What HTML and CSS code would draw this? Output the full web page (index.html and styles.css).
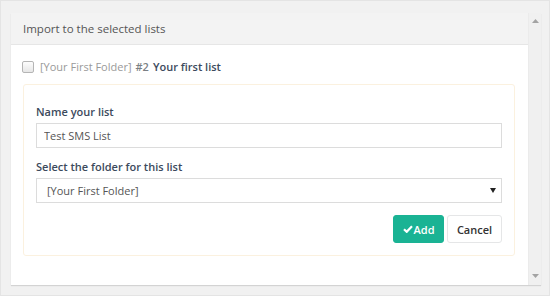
FILE: index.html
```html
<!DOCTYPE html>
<html lang="en">
<head>
    <meta charset="UTF-8">
    <title>Import to lists</title>
    <link rel="stylesheet" href="styles.css">
</head>
<body>

    <div class="frame">
        <div class="card">
            <div class="card-main">
                <div class="card-header">Import to the selected lists</div>

                <div class="card-body">
                    <label class="list-check">
                        <input type="checkbox">
                        <span class="folder">[Your First Folder]</span>
                        <span class="list-id">#2</span>
                        <span class="list-name">Your first list</span>
                    </label>

                    <div class="new-list">
                        <div class="field">
                            <label>Name your list</label>
                            <input type="text" value="Test SMS List">
                        </div>

                        <div class="field">
                            <label>Select the folder for this list</label>
                            <div class="select-wrap">
                                <select>
                                    <option>[Your First Folder]</option>
                                </select>
                                <svg class="caret" width="6" height="5" viewBox="0 0 6 5"><path d="M0 0h6L3 5z" fill="#222"/></svg>
                            </div>
                        </div>

                        <div class="actions">
                            <button class="btn-add">
                                <svg width="10" height="8" viewBox="0 0 10 8"><path d="M1 4.2l2.7 2.6L9 1.2" fill="none" stroke="#fff" stroke-width="2.2"/></svg>Add
                            </button>
                            <button class="btn-cancel">Cancel</button>
                        </div>
                    </div>
                </div>
            </div>

            <div class="scrollbar">
                <svg width="7" height="4" viewBox="0 0 7 4"><path d="M0 4h7L3.5 0z" fill="#a3a3a3"/></svg>
                <svg width="7" height="4" viewBox="0 0 7 4"><path d="M0 0h7L3.5 4z" fill="#a3a3a3"/></svg>
            </div>
        </div>
    </div>

</body>
</html>
```

FILE: styles.css
```css
/* Global Styles */
* {
    box-sizing: border-box;
}

body {
    font-family: 'Open Sans', 'Liberation Sans', sans-serif;
    font-size: 11px;
    background-color: #f1f1f1;
    color: #555;
    margin: 0;
}

.frame {
    height: 296px;
    width: 550px;
    border: 1px solid #e4e4e4;
    padding: 12px 8px 10px 10px;
}

.card {
    display: flex;
    height: 272px;
    background-color: #fff;
    box-shadow: 0 1px 1px rgba(0, 0, 0, 0.12);
}

.card-main {
    flex: 1;
}

.card-header {
    height: 32px;
    background-color: #f3f3f3;
    border-bottom: 1px solid #e6e6e6;
    padding: 7px 12px;
    font-size: 11.5px;
    line-height: 17px;
    color: #555;
}

.card-body {
    padding: 15px 13px 0 11px;
}

.list-check {
    display: flex;
    align-items: center;
    height: 13px;
    gap: 4px;
}

.list-check input {
    appearance: none;
    width: 12px;
    height: 12px;
    margin: 0 2px 0 0;
    border: 1px solid #b5b5b5;
    border-radius: 2px;
    background: linear-gradient(#fdfdfd, #e6e6e6);
}

.folder {
    color: #9a9a9a;
}

.list-id {
    color: #7b7f85;
    font-weight: 600;
}

.list-name {
    color: #3c4a5c;
    font-weight: 600;
}

.new-list {
    margin: 11px 0 0 1px;
    border: 1px solid #fbf1df;
    border-radius: 3px;
    padding: 18px 12px 12px 12px;
}

.field {
    margin-bottom: 10px;
}

.field label {
    display: block;
    font-weight: 600;
    color: #3c4a5c;
    line-height: 17px;
    margin-bottom: 3px;
}

.field input,
.field select {
    display: block;
    width: 100%;
    height: 25px;
    border: 1px solid #dcdcdc;
    border-radius: 0;
    padding: 0 7px;
    font-family: inherit;
    font-size: 11px;
    color: #555;
    background-color: #fff;
    outline: none;
}

.select-wrap {
    position: relative;
}

.field select {
    appearance: none;
    padding-left: 10px;
}

.caret {
    position: absolute;
    right: 6px;
    top: 10px;
}

.actions {
    display: flex;
    justify-content: flex-end;
    gap: 3px;
    margin-top: 12px;
}

.actions button {
    height: 28px;
    border-radius: 3px;
    font-family: inherit;
    font-size: 11px;
    cursor: pointer;
}

.btn-add {
    width: 51px;
    display: flex;
    align-items: center;
    justify-content: center;
    gap: 1px;
    background-color: #1ab394;
    border: 1px solid #1ab394;
    color: #fff;
    font-weight: 600;
    padding: 0;
}

.btn-cancel {
    width: 55px;
    background-color: #fff;
    border: 1px solid #e5e6e7;
    color: #333;
    font-weight: 600;
    padding: 0;
}

.scrollbar {
    width: 13px;
    background-color: #f0f0f0;
    border-left: 1px solid #ebebeb;
    display: flex;
    flex-direction: column;
    justify-content: space-between;
    align-items: center;
    padding: 6px 0 7px;
}
```
